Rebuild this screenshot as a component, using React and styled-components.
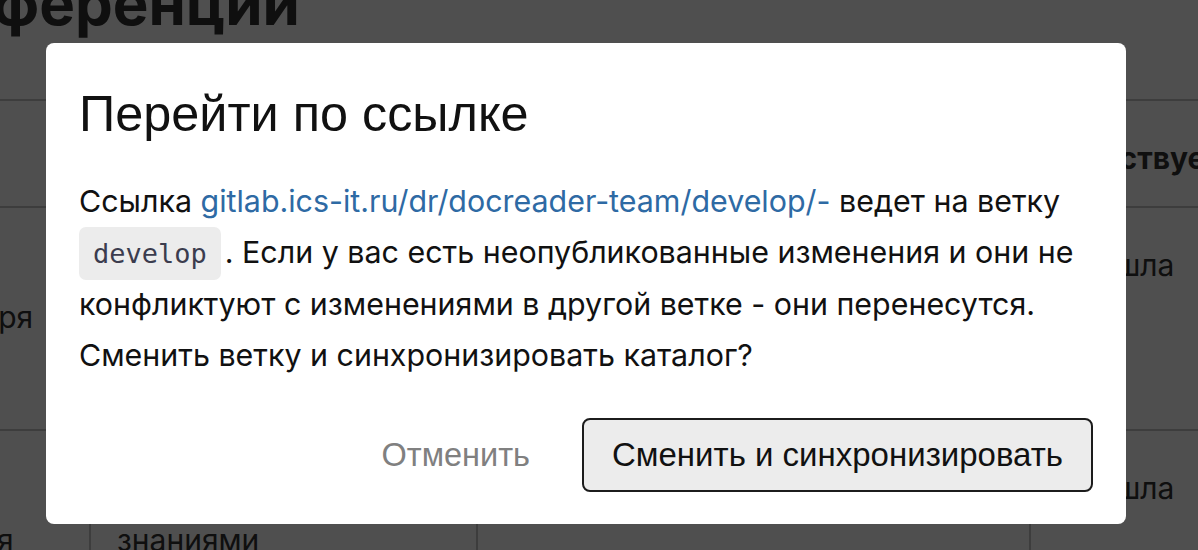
import React from "react";
import styled, { createGlobalStyle } from "styled-components";

const GlobalStyle = createGlobalStyle`
  html, body {
    margin: 0;
    padding: 0;
    background: #ffffff;
    overflow: hidden;
  }
  body {
    font-family: "Inter", "Noto Sans", sans-serif;
    color: #333333;
  }
`;

const Page = styled.div`
  width: 1700px;
  margin: -29px 0 0 -116px;
`;

const Heading = styled.h1`
  margin: 0 0 64px -7px;
  font-size: 60px;
  line-height: 64px;
  font-weight: 700;
  color: #333333;
  white-space: nowrap;
`;

const Table = styled.table`
  border-collapse: collapse;
  table-layout: fixed;
  font-size: 30px;
  line-height: 52px;
`;

const Row = styled.tr`
  height: ${(p) => p.$height}px;
`;

const Cell = styled.td`
  border: 2px solid #c6c6c6;
  padding: 31px 26px 0;
  vertical-align: top;
  width: ${(p) => p.$width}px;
  font-weight: ${(p) => (p.$head ? 700 : 400)};
  white-space: nowrap;
  overflow: hidden;
`;

const Overlay = styled.div`
  position: fixed;
  inset: 0;
  background: rgba(0, 0, 0, 0.69);
  padding: 43px 0 0 46px;
  box-sizing: border-box;
`;

const Dialog = styled.div`
  width: 1080px;
  box-sizing: border-box;
  background: #ffffff;
  border-radius: 8px;
  padding: 42px 33px 32px;
`;

const Title = styled.h2`
  margin: 0;
  font-family: "Liberation Sans", Arial, sans-serif;
  font-size: 50.4px;
  line-height: 57px;
  font-weight: 400;
  color: #111111;
`;

const Body = styled.p`
  margin: 34px 0 0;
  font-family: "Inter", "Noto Sans", sans-serif;
  font-size: 30.4px;
  line-height: 51px;
  color: #111111;
  white-space: nowrap;
`;

const Link = styled.a`
  color: #2e6aa4;
  text-decoration: none;
`;

const Code = styled.code`
  font-family: "DejaVu Sans Mono", "Liberation Mono", monospace;
  font-size: 27px;
  color: #3b3c4e;
  background: #ececec;
  border-radius: 7px;
  padding: 11px 14px;
  margin-right: 4px;
`;

const Actions = styled.div`
  display: flex;
  justify-content: flex-end;
  align-items: center;
  gap: 24px;
  margin-top: 37px;
`;

const Button = styled.button`
  font-family: "Liberation Sans", Arial, sans-serif;
  font-size: ${(p) => (p.$primary ? 33 : 32.5)}px;
  height: 74px;
  box-sizing: border-box;
  border-radius: 8px;
  cursor: pointer;
  padding: 0 ${(p) => (p.$primary ? 28 : 26)}px;
  color: ${(p) => (p.$primary ? "#111111" : "#808080")};
  background: ${(p) => (p.$primary ? "#ececec" : "transparent")};
  border: 2px solid ${(p) => (p.$primary ? "#1c1c1c" : "transparent")};
`;

const rows = [
  { height: 107, head: true, cells: ["Тип", "Описание", "Статус", "Действует"] },
  { height: 223, cells: [<>Из<br />словаря</>, "Проверка терминов", "—", "Прошла"] },
  { height: 160, cells: [<>Мои<br />знания</>, <>Обмен<br />знаниями</>, "—", "Прошла"] },
];

const widths = [151, 333, 499, 400];

export default function App() {
  return (
    <>
      <GlobalStyle />
      <Page>
        <Heading>Конференций</Heading>
        <Table>
          <tbody>
            {rows.map((row, i) => (
              <Row key={i} $height={row.height}>
                {row.cells.map((c, j) => (
                  <Cell key={j} $width={widths[j]} $head={row.head}>
                    {c}
                  </Cell>
                ))}
              </Row>
            ))}
          </tbody>
        </Table>
      </Page>
      <Overlay>
        <Dialog role="dialog">
          <Title>Перейти по ссылке</Title>
          <Body>
            Ссылка <Link href="#">gitlab.ics-it.ru/dr/docreader-team/develop/-</Link> ведет на ветку
            <br />
            <Code>develop</Code>. Если у вас есть неопубликованные изменения и они не
            <br />
            конфликтуют с изменениями в другой ветке - они перенесутся.
            <br />
            Сменить ветку и синхронизировать каталог?
          </Body>
          <Actions>
            <Button>Отменить</Button>
            <Button $primary>Сменить и синхронизировать</Button>
          </Actions>
        </Dialog>
      </Overlay>
    </>
  );
}
